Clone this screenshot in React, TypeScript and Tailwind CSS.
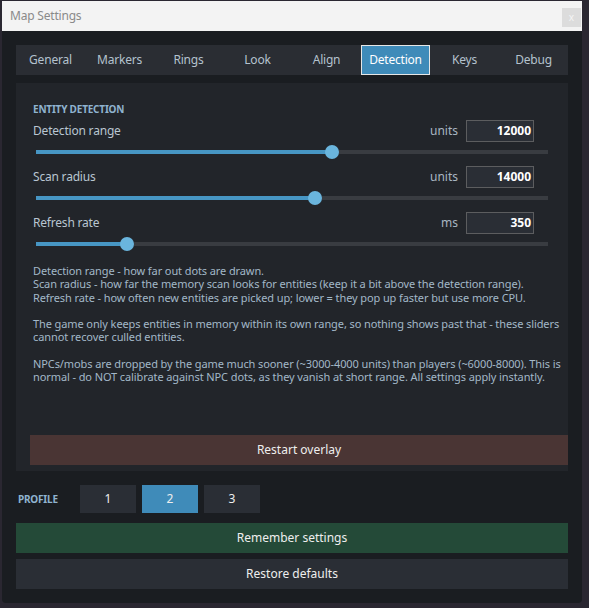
import { useState } from 'react';

const TABS = ['General', 'Markers', 'Rings', 'Look', 'Align', 'Detection', 'Keys', 'Debug'];

const SLIDERS = [
  { label: 'Detection range', unit: 'units', value: '12000', pct: 57.8 },
  { label: 'Scan radius', unit: 'units', value: '14000', pct: 54.5 },
  { label: 'Refresh rate', unit: 'ms', value: '350', pct: 17.8 },
];

const HELP = `Detection range - how far out dots are drawn.
Scan radius - how far the memory scan looks for entities (keep it a bit above the detection range).
Refresh rate - how often new entities are picked up; lower = they pop up faster but use more CPU.

The game only keeps entities in memory within its own range, so nothing shows past that - these sliders cannot recover culled entities.

NPCs/mobs are dropped by the game much sooner (~3000-4000 units) than players (~6000-8000). This is normal - do NOT calibrate against NPC dots, as they vanish at short range. All settings apply instantly.`;

export default function App() {
  const [tab, setTab] = useState('Detection');
  const [profile, setProfile] = useState(2);

  return (
    <div className="w-[589px] h-[608px] bg-[#2a2731] pt-[1px] pl-[2px]" style={{ fontFamily: '"Noto Sans", "Open Sans", sans-serif' }}>
      <div className="w-[580px] h-[602px] flex flex-col bg-[#1a1d21] rounded-b-[4px] overflow-hidden">
        {/* title bar */}
        <div className="h-[30px] shrink-0 bg-[#f3f3f3] flex items-start justify-between pl-[8px] pr-[1px]">
          <span className="text-[12px] leading-[30px] text-[#8a8a8a] tracking-[-0.2px]">Map Settings</span>
          <button className="mt-[7px] w-[19px] h-[19px] bg-[#dcdcdc] text-[#f4f4f4] text-[10px] leading-[19px] text-center">x</button>
        </div>

        <div className="flex-1 flex flex-col px-[14px] pt-[14px]">
          {/* tabs */}
          <div className="h-[30px] grid grid-cols-8 bg-[#2a2d33]">
            {TABS.map(t => (
              <button
                key={t}
                onClick={() => setTab(t)}
                className={`text-[12px] tracking-[-0.2px] ${t === tab ? 'bg-[#3f8bb9] text-white border border-[#e6e6e6]' : 'text-[#b4c2ce]'}`}
              >
                {t}
              </button>
            ))}
          </div>

          {/* panel */}
          <div className="mt-[8px] h-[388px] flex flex-col bg-[#22252a]">
            <div className="pl-[17px] pr-[34px] pt-[19px]">
              <div className="text-[10px] leading-[14px] font-bold text-[#8fb3cf] uppercase tracking-[-0.2px]">Entity Detection</div>
            </div>

            <div className="mt-[4px]">
              {SLIDERS.map(s => (
                <div key={s.label} className="mb-[7px]">
                  <div className="h-[22px] flex items-center pl-[17px] pr-[34px]">
                    <span className="text-[12px] text-[#b9c6d1] tracking-[-0.2px]">{s.label}</span>
                    <span className="ml-auto text-[12px] text-[#a9b6c1]">{s.unit}</span>
                    <div className="ml-[8px] w-[68px] h-[22px] bg-[#2a2e35] border border-[#5c5d5f] text-right pr-[2px] text-[12px] font-bold leading-[20px] text-white">
                      {s.value}
                    </div>
                  </div>
                  <div className="mt-[3px] h-[14px] px-[20px] flex items-center">
                    <div className="relative w-full h-[4px] bg-[#393c41]">
                      <div className="absolute left-0 top-0 h-full bg-[#4796c4]" style={{ width: `${s.pct}%` }} />
                      <div
                        className="absolute top-1/2 w-[14px] h-[14px] -mt-[7px] -ml-[7px] rounded-full bg-[#6ab5dd]"
                        style={{ left: `${s.pct}%` }}
                      />
                    </div>
                  </div>
                </div>
              ))}
            </div>

            <p className="mt-[6px] pl-[17px] -mr-[10px] text-[11px] leading-[13.3px] text-[#a3b8c8] whitespace-pre-line tracking-[-0.1px]">
              {HELP}
            </p>

            <button className="mt-auto mb-[6px] ml-[14px] h-[30px] bg-[#4a3534] text-[12px] text-[#eeeeee]">
              Restart overlay
            </button>
          </div>

          {/* profiles */}
          <div className="mt-[14px] h-[28px] flex items-center">
            <span className="w-[64px] pl-[2px] text-[10px] font-bold text-[#8fb3cf] tracking-[-0.2px]">PROFILE</span>
            <div className="flex gap-[6px]">
              {[1, 2, 3].map(n => (
                <button
                  key={n}
                  onClick={() => setProfile(n)}
                  className={`w-[56px] h-[28px] text-[12px] text-[#eeeeee] ${n === profile ? 'bg-[#3f8bb9]' : 'bg-[#2a2e35]'}`}
                >
                  {n}
                </button>
              ))}
            </div>
          </div>

          <button className="mt-[10px] h-[30px] bg-[#244a38] text-[12px] text-[#eeeeee]">Remember settings</button>
          <button className="mt-[6px] h-[30px] bg-[#2a2e35] text-[12px] text-[#eeeeee]">Restore defaults</button>
        </div>
      </div>
    </div>
  );
}
